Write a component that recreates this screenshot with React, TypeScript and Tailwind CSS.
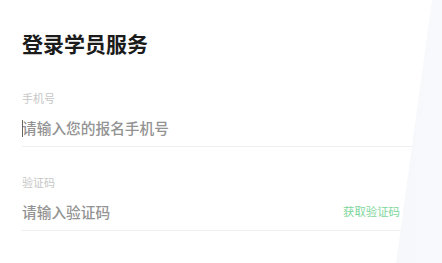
const Field = ({
  label,
  placeholder,
  action,
  caret,
}: {
  label: string;
  placeholder: string;
  action?: string;
  caret?: boolean;
}) => {
  return (
    <div className="flex flex-col">
      <label className="text-[11px] leading-[14px] text-[#c6c6c6]">{label}</label>
      <div className="relative flex items-center justify-between h-[42px] pt-[5px] border-b border-[#efefef]">
        {caret && (
          <span className="absolute left-0 top-[15px] w-px h-[17px] bg-[#666]" />
        )}
        <input
          placeholder={placeholder}
          className="flex-1 bg-transparent outline-none text-[14.7px] font-medium text-[#333] placeholder:text-[#939393]"
        />
        {action && (
          <button className="mr-[30px] text-[11.4px] text-[#7dd69b] cursor-pointer">
            {action}
          </button>
        )}
      </div>
    </div>
  );
};

export default function App() {
  return (
    <div
      className="relative w-[442px] h-[263px] overflow-hidden bg-gradient-to-r from-[#eaecf5] to-[#f8f9fc]"
      style={{ fontFamily: '"Noto Sans CJK SC", "Noto Sans", sans-serif' }}
    >
      <div className="h-full bg-white pt-[30px] pl-[22px] pr-[12px] [clip-path:path('M0,-10_L423,-10_Q433,-10_432,0_L396,263_L0,263_Z')]">
        <h1 className="text-[21px] leading-[26px] font-bold text-[#1b1b1b]">登录学员服务</h1>
        <div className="mt-[35px]">
          <Field label="手机号" placeholder="请输入您的报名手机号" caret />
        </div>
        <div className="mt-[28px]">
          <Field label="验证码" placeholder="请输入验证码" action="获取验证码" />
        </div>
      </div>
    </div>
  );
}
